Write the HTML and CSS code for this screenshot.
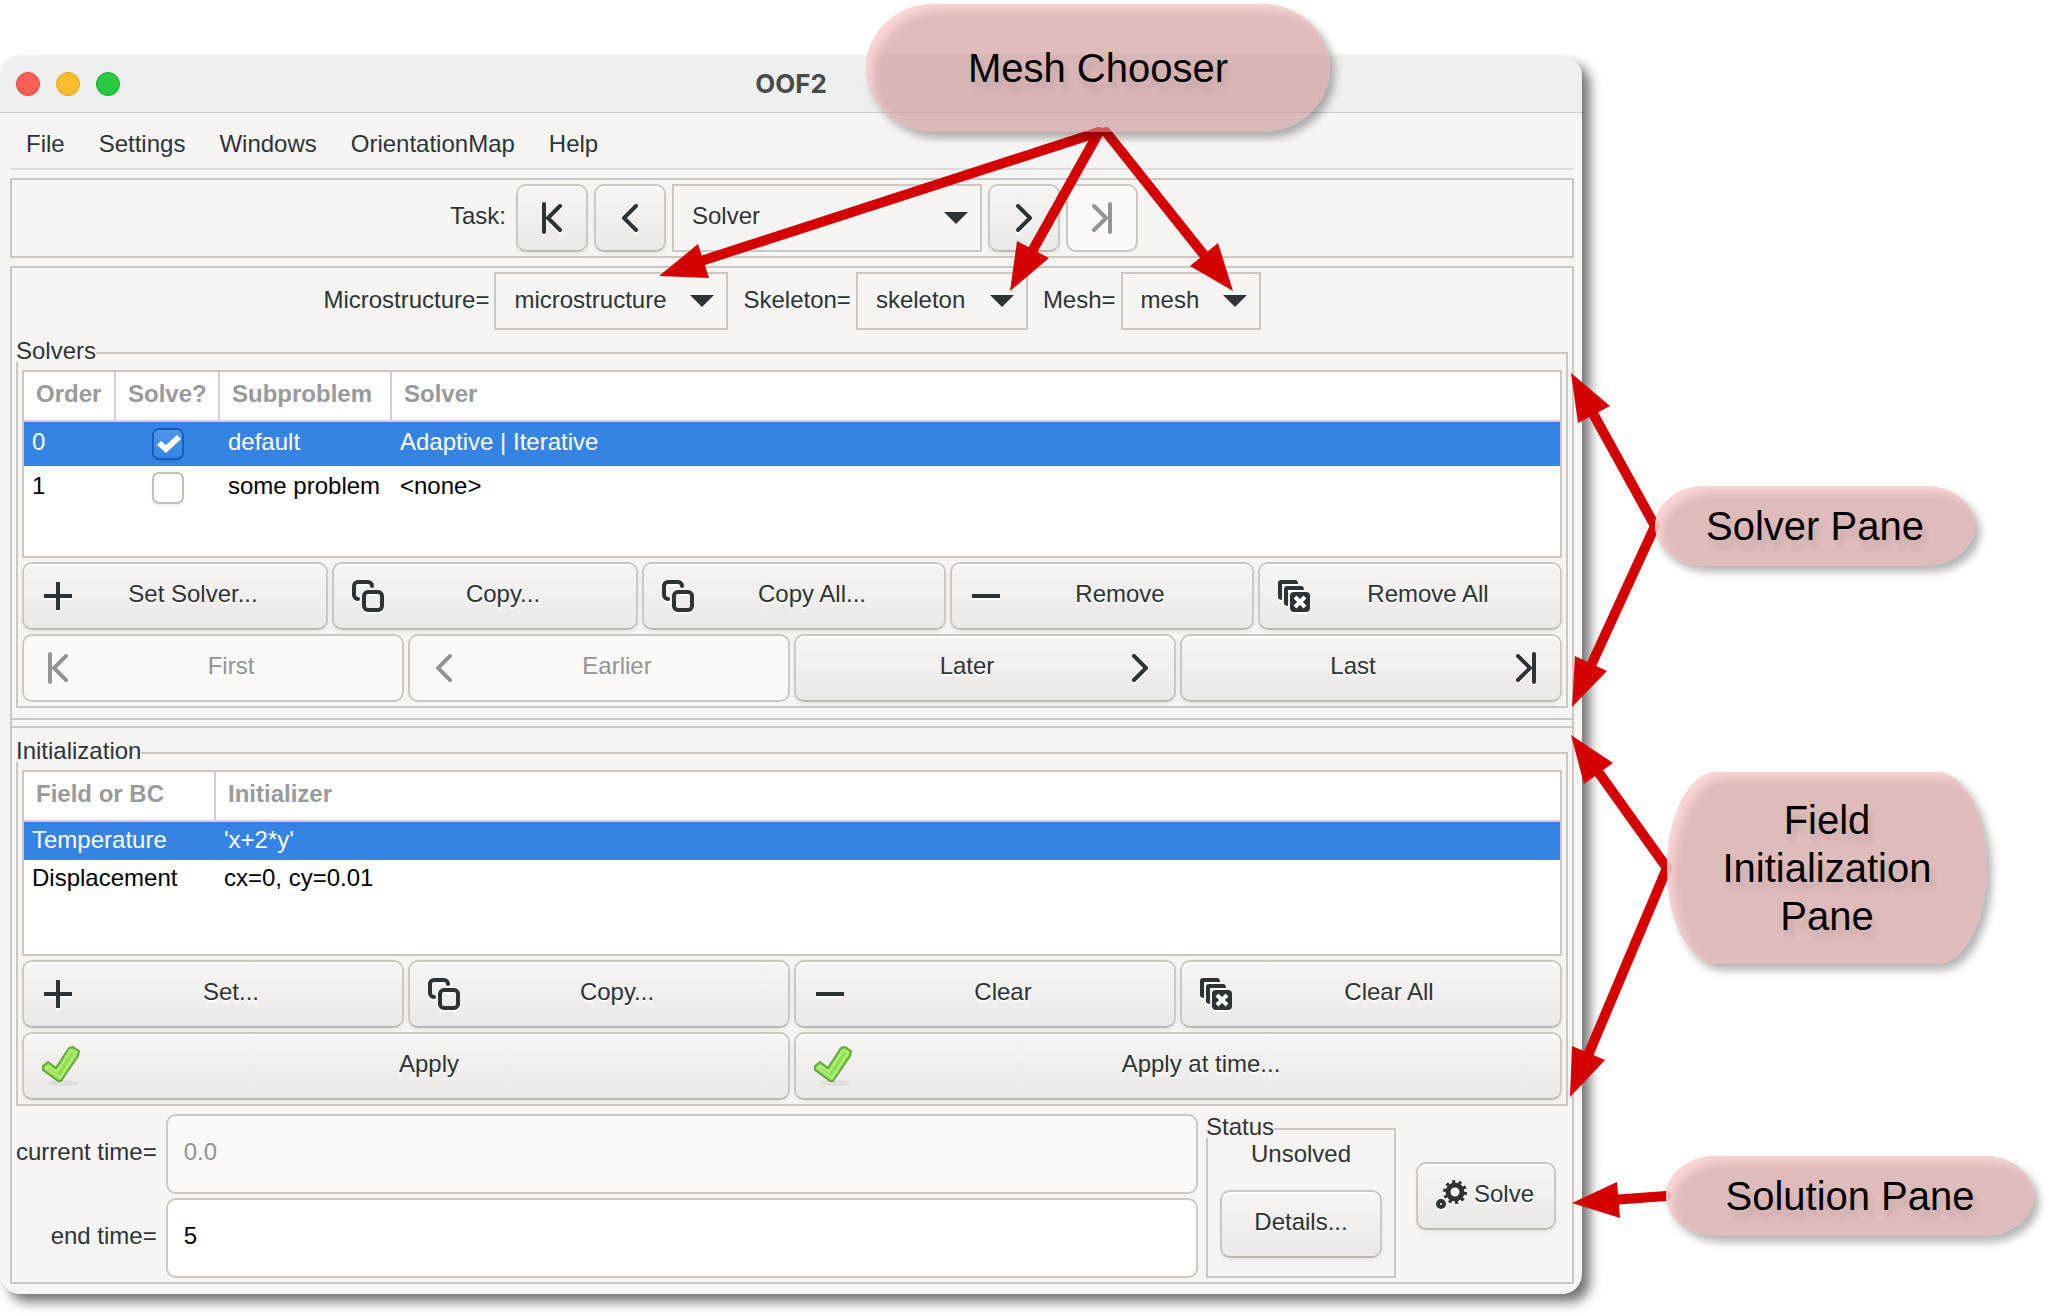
FILE: index.html
```html
<!DOCTYPE html>
<html lang="en">
<head>
<meta charset="utf-8">
<title>OOF2</title>
<link rel="stylesheet" href="styles.css">
</head>
<body>
<svg class="sprite" aria-hidden="true">
  <symbol id="i-first" viewBox="0 0 32 32"><path class="line" d="M8 2V30M24 4L12 16L24 28"/></symbol>
  <symbol id="i-prev" viewBox="0 0 32 32"><path class="line" d="M22 4L10 16L22 28"/></symbol>
  <symbol id="i-next" viewBox="0 0 32 32"><path class="line" d="M10 4L22 16L10 28"/></symbol>
  <symbol id="i-last" viewBox="0 0 32 32"><path class="line" d="M24 2V30M8 4L20 16L8 28"/></symbol>
  <symbol id="i-plus" viewBox="0 0 32 32"><path fill="currentColor" d="M14 2h4v12h12v4H18v12h-4V18H2v-4h12z"/></symbol>
  <symbol id="i-minus" viewBox="0 0 32 32"><path fill="currentColor" d="M2 14h28v4H2z"/></symbol>
  <symbol id="i-copy" viewBox="0 0 32 32"><rect class="line" x="12" y="12" width="18" height="18" rx="4"/><path class="line" d="M20 6a4 4 0 0 0-4-4H6a4 4 0 0 0-4 4v9a4 4 0 0 0 4 4"/></symbol>
  <symbol id="i-stack" viewBox="0 0 32 32">
    <path fill="currentColor" d="M0 20V3Q0 0 3 0H17Q20 0 20 4H4V20Q1 20 0 18z"/>
    <path fill="currentColor" d="M6 26V9Q6 6 9 6H23Q26 6 26 10H10V26Q7 26 6 24z"/>
    <rect fill="currentColor" x="12" y="12" width="20" height="20" rx="4"/>
    <path stroke="#fff" stroke-width="4" d="M17 17L27 27M27 17L17 27"/>
  </symbol>
  <symbol id="i-check" viewBox="0 0 42 40">
    <ellipse cx="21" cy="37" rx="16" ry="3" fill="#000" opacity=".06"/>
    <path d="M1 20L6 16L14 22L27 2L31 1L37 5L36 10L19 35L16 35L1 24z" fill="#8fe04c" stroke="#66a83c" stroke-width="2" stroke-linejoin="round"/>
    <path d="M4 22L6 20L15 26L29 4L34 7L18 32z" fill="none" stroke="#b5ec85" stroke-width="2" stroke-linejoin="round"/>
  </symbol>
  <symbol id="i-gears" viewBox="0 0 32 32">
    <circle cx="19" cy="12" r="7" fill="none" stroke="currentColor" stroke-width="5"/>
    <circle cx="19" cy="12" r="10" fill="none" stroke="currentColor" stroke-width="4" stroke-dasharray="3 3.283"/>
    <circle cx="5" cy="24" r="3" fill="none" stroke="currentColor" stroke-width="4"/>
  </symbol>
  <symbol id="i-drop" viewBox="0 0 24 12"><path fill="currentColor" d="M0 0H24L12 12z"/></symbol>
</svg>

<div class="page">
  <main class="window">
    <header class="titlebar">
      <div class="lights"><i class="light red"></i><i class="light yellow"></i><i class="light green"></i></div>
      <h1 class="title">OOF2</h1>
    </header>
    <nav class="menubar">
      <button class="menu">File</button>
      <button class="menu">Settings</button>
      <button class="menu">Windows</button>
      <button class="menu">OrientationMap</button>
      <button class="menu">Help</button>
    </nav>

    <section class="taskbar">
      <label class="task-label" for="task">Task:</label>
      <button class="btn square" aria-label="First page"><svg class="icon"><use href="#i-first"/></svg></button>
      <button class="btn square" aria-label="Previous page"><svg class="icon"><use href="#i-prev"/></svg></button>
      <span class="combo task"><select id="task"><option>Solver</option></select><svg class="drop"><use href="#i-drop"/></svg></span>
      <button class="btn square" aria-label="Next page"><svg class="icon"><use href="#i-next"/></svg></button>
      <button class="btn square" aria-label="Last page" disabled><svg class="icon"><use href="#i-last"/></svg></button>
    </section>

    <div class="content">
      <section class="pane upper">
        <div class="chooser">
          <div class="field"><label for="micro">Microstructure=</label><span class="combo micro"><select id="micro"><option>microstructure</option></select><svg class="drop"><use href="#i-drop"/></svg></span></div>
          <div class="field"><label for="skel">Skeleton=</label><span class="combo skel"><select id="skel"><option>skeleton</option></select><svg class="drop"><use href="#i-drop"/></svg></span></div>
          <div class="field"><label for="mesh">Mesh=</label><span class="combo mesh"><select id="mesh"><option>mesh</option></select><svg class="drop"><use href="#i-drop"/></svg></span></div>
        </div>
        <fieldset class="frame">
          <legend>Solvers</legend>
          <div class="list">
            <table class="solvers">
              <colgroup><col class="c-order"><col class="c-solve"><col class="c-sub"><col></colgroup>
              <thead><tr><th>Order</th><th>Solve?</th><th>Subproblem</th><th>Solver</th></tr></thead>
              <tbody>
                <tr class="selected"><td>0</td><td class="tick"><input type="checkbox" aria-label="Solve default" checked></td><td>default</td><td>Adaptive | Iterative</td></tr>
                <tr><td>1</td><td class="tick"><input type="checkbox" aria-label="Solve some problem"></td><td>some problem</td><td>&lt;none&gt;</td></tr>
              </tbody>
            </table>
          </div>
          <div class="row five">
            <button class="btn"><svg class="icon"><use href="#i-plus"/></svg><span>Set Solver...</span></button>
            <button class="btn"><svg class="icon"><use href="#i-copy"/></svg><span>Copy...</span></button>
            <button class="btn"><svg class="icon"><use href="#i-copy"/></svg><span>Copy All...</span></button>
            <button class="btn"><svg class="icon"><use href="#i-minus"/></svg><span>Remove</span></button>
            <button class="btn"><svg class="icon"><use href="#i-stack"/></svg><span>Remove All</span></button>
          </div>
          <div class="row four">
            <button class="btn" disabled><svg class="icon"><use href="#i-first"/></svg><span>First</span></button>
            <button class="btn" disabled><svg class="icon"><use href="#i-prev"/></svg><span>Earlier</span></button>
            <button class="btn"><span>Later</span><svg class="icon"><use href="#i-next"/></svg></button>
            <button class="btn"><span>Last</span><svg class="icon"><use href="#i-last"/></svg></button>
          </div>
        </fieldset>
      </section>

      <section class="pane lower">
        <fieldset class="frame">
          <legend>Initialization</legend>
          <div class="list">
            <table class="inits">
              <colgroup><col class="c-field"><col></colgroup>
              <thead><tr><th>Field or BC</th><th>Initializer</th></tr></thead>
              <tbody>
                <tr class="selected"><td>Temperature</td><td>'x+2*y'</td></tr>
                <tr><td>Displacement</td><td>cx=0, cy=0.01</td></tr>
              </tbody>
            </table>
          </div>
          <div class="row four">
            <button class="btn"><svg class="icon"><use href="#i-plus"/></svg><span>Set...</span></button>
            <button class="btn"><svg class="icon"><use href="#i-copy"/></svg><span>Copy...</span></button>
            <button class="btn"><svg class="icon"><use href="#i-minus"/></svg><span>Clear</span></button>
            <button class="btn"><svg class="icon"><use href="#i-stack"/></svg><span>Clear All</span></button>
          </div>
          <div class="row two">
            <button class="btn"><svg class="icon check"><use href="#i-check"/></svg><span>Apply</span></button>
            <button class="btn"><svg class="icon check"><use href="#i-check"/></svg><span>Apply at time...</span></button>
          </div>
        </fieldset>

        <div class="solution">
          <div class="times">
            <label for="current">current time=</label><input id="current" type="text" value="0.0" disabled>
            <label for="end">end time=</label><input id="end" type="text" value="5">
          </div>
          <fieldset class="status">
            <legend>Status</legend>
            <p>Unsolved</p>
            <button class="btn"><span>Details...</span></button>
          </fieldset>
          <button class="btn solve"><svg class="icon"><use href="#i-gears"/></svg><span>Solve</span></button>
        </div>
      </section>
    </div>
  </main>

  <svg class="arrows" width="2050" height="1314" viewBox="0 0 2050 1314" aria-hidden="true">
    <g fill="none" stroke="#d40000" stroke-width="10" stroke-linecap="round" stroke-linejoin="round">
      <path d="M1099 132L698 262"/>
      <path d="M1099 132L1030 255"/>
      <path d="M1106 132L1208 260"/>
      <path d="M1590 408L1655 526L1588 672"/>
      <path d="M1594 766L1667 868L1586 1060"/>
      <path d="M1612 1200L1666 1196"/>
    </g>
    <g fill="#d40000">
      <path d="M659 276L698 244L709 278z"/>
      <path d="M1010 291L1017 241L1049 258z"/>
      <path d="M1233 291L1218 243L1190 266z"/>
      <path d="M1571 373L1610 406L1578 423z"/>
      <path d="M1572 707L1575 656L1607 671z"/>
      <path d="M1571 735L1613 763L1584 784z"/>
      <path d="M1570 1097L1572 1046L1605 1060z"/>
      <path d="M1572 1203L1617 1182L1620 1218z"/>
    </g>
  </svg>
  <div class="callout mesh-note">Mesh Chooser</div>
  <div class="callout solver-note">Solver Pane</div>
  <div class="callout field-note">Field<br>Initialization<br>Pane</div>
  <div class="callout solution-note">Solution Pane</div>
</div>
</body>
</html>
```

FILE: styles.css
```css
* { box-sizing: border-box; }

body {
  margin: 0;
  background: #fff;
  color: #2e3436;
  font: 24px/28px "Liberation Sans", Arial, sans-serif;
}

button, select, input { font: inherit; color: inherit; margin: 0; }

.sprite { display: none; }
.line { fill: none; stroke: currentColor; stroke-width: 4; stroke-linecap: round; stroke-linejoin: round; }

/* The right gutter holds the callouts */
.page { position: relative; padding: 56px 468px 20px 0; overflow: hidden; }

.window {
  background: #f6f5f4;
  border-radius: 20px;
  padding-bottom: 10px;
  box-shadow: 8px 8px 12px rgba(0, 0, 0, .54), 0 0 2px rgba(0, 0, 0, .1);
}

.titlebar {
  display: grid;
  grid-template-columns: 1fr auto 1fr;
  align-items: center;
  height: 57px;
  padding: 0 16px;
  background: #efefef;
  border-bottom: 1px solid #cfcfcf;
  border-radius: 20px 20px 0 0;
}
.lights { display: flex; gap: 16px; }
.light { width: 24px; height: 24px; border-radius: 50%; border: 1px solid; }
.red { background: #ff5f57; border-color: #e2463f; }
.yellow { background: #febc2e; border-color: #e1a116; }
.green { background: #28c840; border-color: #12ac28; }
.title { margin: 0; font: 700 26px/28px Inter, sans-serif; color: #4a4a4a; }

.menubar {
  display: flex;
  margin: 0 8px 8px 10px;
  padding-top: 6px;
  height: 57px;
  border-bottom: 2px solid #dedcda;
}
.menu { padding: 0 17px; border: 0; background: none; }
.menu:first-child { padding-left: 16px; }

.taskbar {
  display: flex;
  justify-content: center;
  align-items: center;
  gap: 6px;
  margin: 0 8px 8px 10px;
  padding: 4px 4px 4px 8px;
  border: 2px solid #cdc7c2;
}
.task-label { padding: 0 4px 4px 0; }

.combo { display: inline-grid; align-items: center; height: 58px; }
.combo select {
  grid-area: 1 / 1;
  width: 100%;
  height: 100%;
  padding: 0 40px 2px 18px;
  appearance: none;
  background: none;
  border: 2px solid #cdc7c2;
  border-radius: 0;
}
.drop { grid-area: 1 / 1; justify-self: end; width: 24px; height: 12px; margin-right: 14px; pointer-events: none; }
.combo.task { width: 310px; height: 68px; }
.combo.task select { padding-bottom: 4px; }
.combo.micro { width: 234px; }
.combo.skel { width: 172px; }
.combo.mesh { width: 140px; }

.content { margin: 0 8px 0 10px; border: 2px solid #cdc7c2; }
.pane { padding: 4px; }
.upper { padding-bottom: 10px; border-bottom: 2px solid #cdc7c2; }
.lower { margin-top: 6px; padding-top: 16px; border-top: 2px solid #cdc7c2; }

.chooser { display: flex; justify-content: center; gap: 15px; margin-bottom: 14px; }
.field { display: flex; align-items: center; gap: 5px; }
.field label { padding-bottom: 2px; }

fieldset { margin: 0; min-width: 0; border: 2px solid #cdc7c2; }
legend { padding: 0 0 4px; line-height: 14px; background: #f6f5f4; }
.frame { padding: 8px 4px 4px; }
.frame legend { margin-left: -6px; }

.list { min-height: 186px; background: #fff; border: 2px solid #cdc7c2; }
.upper .list { min-height: 188px; }
table { width: 100%; border-collapse: separate; border-spacing: 0; table-layout: fixed; }
.c-order { width: 92px; }
.c-solve { width: 104px; }
.c-sub { width: 172px; }
.c-field { width: 192px; }
th {
  height: 50px;
  padding: 0 0 4px 12px;
  text-align: left;
  color: #989a9b;
  border-bottom: 2px solid #d5d0cc;
  border-right: 2px solid #d5d0cc;
}
th:last-child { border-right: 0; }
td { height: 38px; padding: 0 0 2px 8px; color: #000; white-space: nowrap; }
.solvers td { height: 44px; padding-bottom: 4px; }
.solvers .tick { padding: 0; text-align: center; }
tr.selected td { background: #3584e4; color: #fff; }

input[type="checkbox"] {
  display: block;
  width: 32px;
  height: 32px;
  margin: 0 auto;
  appearance: none;
  background: #fff;
  border: 2px solid #c5beb7;
  border-radius: 7px;
  box-shadow: 0 2px 2px rgba(0, 0, 0, .06);
}
input[type="checkbox"]:checked { background: linear-gradient(#5096ea, #3584e4); border-color: #185fb4; }
input[type="checkbox"]:checked::before {
  content: "";
  display: block;
  width: 24px;
  height: 18px;
  margin: 5px 3px;
  background: #fff;
  clip-path: polygon(0 10px, 4px 6px, 9px 10px, 20px 0, 24px 4px, 9px 18px);
}

.row { display: grid; gap: 4px; margin-top: 4px; }
.five { grid-template-columns: repeat(2, 306fr) repeat(3, 304fr); }
.four { grid-template-columns: repeat(4, 1fr); }
.two { grid-template-columns: repeat(2, 1fr); }

.btn {
  display: flex;
  align-items: center;
  gap: 4px;
  height: 68px;
  padding: 0 18px;
  background: linear-gradient(#f6f5f4, #ebe9e8);
  border: 2px solid #cdc7c2;
  border-bottom-color: #bfb8b1;
  border-radius: 10px;
  box-shadow: inset 0 2px #fff, 0 2px 4px rgba(0, 0, 0, .07);
  text-shadow: 0 2px #fff;
}
.btn span { flex: 1; padding-bottom: 4px; text-align: center; }
.btn:disabled {
  background: #faf9f8;
  border-color: #cdc7c2;
  box-shadow: none;
  color: #929595;
  text-shadow: none;
}
.icon { flex: none; width: 32px; height: 32px; filter: drop-shadow(0 2px 0 #fff); }
.btn:disabled .icon, .icon.check { filter: none; }
.icon.check { width: 42px; height: 40px; }
.square { width: 72px; }

.solution { display: flex; align-items: center; margin: 8px 12px 0 0; }
.times {
  flex: 1;
  display: grid;
  grid-template-columns: auto 1fr;
  gap: 4px 9px;
  align-items: center;
  margin-right: 8px;
}
.times label { padding-bottom: 4px; text-align: right; }
.times input {
  width: 100%;
  height: 80px;
  padding: 0 16px 4px;
  color: #000;
  background: #fff;
  border: 2px solid #cdc7c2;
  border-radius: 10px;
}
.times input:disabled { background: #faf9f8; color: #929595; }

.status { width: 190px; margin: 6px 20px 0 0; padding: 2px 12px 18px; }
.status legend { margin-left: -14px; }
.status p { margin: 0 0 22px; text-align: center; }
.status .btn { width: 100%; }
.solve { width: 140px; }

.arrows { position: absolute; left: 0; top: 0; pointer-events: none; }
.callout {
  position: absolute;
  display: grid;
  place-items: center;
  text-align: center;
  font-size: 40px;
  line-height: 48px;
  color: #000;
  background: rgba(202, 143, 143, .6);
  border-radius: 50px / 50%;
  box-shadow: inset 8px 8px 10px -2px rgba(255, 216, 216, .9), 5px 6px 8px rgba(0, 0, 0, .3);
  text-shadow: 4px 8px 6px rgba(0, 0, 0, .1);
}
.mesh-note { left: 866px; top: 4px; width: 464px; height: 128px; border-radius: 68px / 50%; }
.solver-note { left: 1655px; top: 486px; width: 320px; height: 80px; }
.field-note { left: 1667px; top: 772px; width: 320px; height: 192px; }
.solution-note { left: 1666px; top: 1156px; width: 368px; height: 80px; }
```
